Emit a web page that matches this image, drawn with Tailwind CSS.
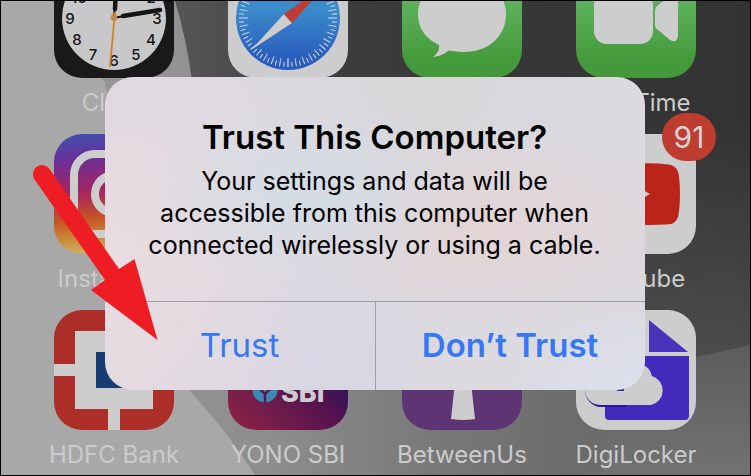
<!DOCTYPE html>
<html lang="en">
<head>
    <meta charset="UTF-8">
    <meta name="viewport" content="width=device-width,initial-scale=1.0">
    <title>Trust This Computer?</title>
    <script src="https://cdn.jsdelivr.net/npm/@tailwindcss/browser@4"></script>
</head>
<body class="bg-black font-['Inter','Liberation_Sans',sans-serif]">
    <main class="relative h-screen overflow-hidden border border-black">
        <!-- wallpaper -->
        <svg class="absolute inset-0 h-full w-full" viewBox="0 0 749 474" preserveAspectRatio="none" aria-hidden="true">
            <defs>
                <linearGradient id="mid" x1="0" y1="0" x2="1" y2="0">
                    <stop offset="0" stop-color="#9a9a9a"/>
                    <stop offset=".35" stop-color="#8e8e8e"/>
                    <stop offset=".6" stop-color="#787777"/>
                    <stop offset=".78" stop-color="#6b6b6b"/>
                    <stop offset="1" stop-color="#686868"/>
                </linearGradient>
                <linearGradient id="dark" x1="0" y1="0" x2="1" y2="0">
                    <stop offset="0" stop-color="#565656"/>
                    <stop offset=".28" stop-color="#3c3c3c"/>
                    <stop offset="1" stop-color="#323232"/>
                </linearGradient>
                <linearGradient id="lift" x1="0" y1="0" x2="0" y2="1">
                    <stop offset=".3" stop-color="#555" stop-opacity="0"/>
                    <stop offset="1" stop-color="#555" stop-opacity=".8"/>
                </linearGradient>
                <linearGradient id="floor" x1="0" y1="0" x2="0" y2="1">
                    <stop offset="0" stop-color="#5c5c5c"/>
                    <stop offset="1" stop-color="#727272"/>
                </linearGradient>
            </defs>
            <rect width="749" height="474" fill="url(#mid)"/>
            <path d="M0 0H51L104 82C130 200 140 330 188 389Q226 430 254 474H0Z" fill="#a8a8a8"/>
            <path d="M174 0Q186 40 191 80Q210 300 420 370Q560 400 749 344V0Z" fill="url(#dark)"/>
            <path d="M174 0Q186 40 191 80Q210 300 420 370Q560 400 749 344V0Z" fill="url(#lift)"/>
            <path d="M600 374Q690 358 749 344V474H600Z" fill="url(#floor)"/>
        </svg>

        <!-- home screen -->
        <div class="relative -mt-[43px] grid grid-cols-4 pr-[27px] pl-[26px] text-2xl text-[#cbcbcb]">
            <div class="flex flex-col items-center">
                <svg class="size-[120px] rounded-[28px] bg-[#191919]" viewBox="0 0 120 120" aria-hidden="true">
                    <circle cx="60" cy="60" r="52" fill="#c8c8ca"/>
                    <g font-size="15" font-weight="500" fill="#151515" text-anchor="middle">
                        <text x="97" y="45">2</text>
                        <text x="103" y="66">3</text>
                        <text x="97" y="87">4</text>
                        <text x="82" y="102">5</text>
                        <text x="60" y="108">6</text>
                        <text x="39" y="102">7</text>
                        <text x="23" y="87">8</text>
                        <text x="16" y="66">9</text>
                        <text x="25" y="45">10</text>
                    </g>
                    <path d="M60 60L62 32M60 60L70 58" stroke="#151515" stroke-width="2"/>
                    <path d="M61 51L62 30M69 58L106 52" stroke="#151515" stroke-width="4.5" stroke-linecap="round"/>
                    <path d="M61 54L56 109" stroke="#d8801c" stroke-width="1.8"/>
                    <circle cx="60" cy="59.500" r="2.500" fill="#999" stroke="#d8801c" stroke-width="1.500"/>
                </svg>
                <span class="h-14 leading-[50px] whitespace-nowrap">Clock</span>
            </div>
            <div class="flex flex-col items-center">
                <svg class="size-[120px] rounded-[28px] bg-[#cdcdcd]" viewBox="0 0 120 120" aria-hidden="true">
                    <defs>
                        <linearGradient id="compass" x1="0" y1="0" x2="0" y2="1">
                            <stop offset=".4" stop-color="#3a8cca"/>
                            <stop offset=".85" stop-color="#2c60c0"/>
                            <stop offset="1" stop-color="#2b58bd"/>
                        </linearGradient>
                    </defs>
                    <circle cx="60" cy="60" r="52" fill="url(#compass)"/>
                    <g fill="none" stroke="#c9d4e0">
                        <circle cx="60" cy="60" r="45" stroke-width="8" pathLength="360" stroke-dasharray="1.300 8.700" stroke-dashoffset=".6"/>
                        <circle cx="60" cy="60" r="46.500" stroke-width="5" pathLength="360" stroke-dasharray="1.300 8.700" stroke-dashoffset="-4.400"/>
                        <circle cx="60" cy="60" r="44.500" stroke="#8fb2dd" stroke-width="9" pathLength="360" stroke-dasharray="2.400 87.600" stroke-dashoffset="1.200"/>
                    </g>
                    <path d="M23 92L56 56L64 65Z" fill="#cdcdcd"/>
                    <path d="M97 28L56 56L64 65Z" fill="#bf3a30"/>
                </svg>
                <span class="h-14 leading-[50px] whitespace-nowrap">Safari</span>
            </div>
            <div class="flex flex-col items-center">
                <svg class="size-[120px] rounded-[28px] bg-linear-to-b from-[#62c062] from-10% via-[#55a950] via-55% to-[#44993a] to-85%" viewBox="0 0 120 120" aria-hidden="true">
                    <path d="M60 18C84 18 104 34 104 56C104 80 84 95 60 94Q52 93 47 92.500Q40 98 31 99Q38 94 37 87C25 81 16 72 16 56C16 34 36 18 60 18Z" fill="#cdcdcd"/>
                </svg>
                <span class="h-14 leading-[50px] whitespace-nowrap">Messages</span>
            </div>
            <div class="flex flex-col items-center">
                <svg class="size-[120px] rounded-[28px] bg-linear-to-b from-[#62c062] from-10% via-[#55a950] via-55% to-[#44993a] to-85%" viewBox="0 0 120 120" aria-hidden="true">
                    <rect x="18" y="34" width="59" height="52" rx="13" fill="#cdcdcd"/>
                    <path d="M79 53Q79 50 81 48L92 39Q102 33 102 42V78Q101 86 94 82L81 71Q79 70 79 67Z" fill="#cdcdcd"/>
                </svg>
                <span class="h-14 leading-[50px] whitespace-nowrap">FaceTime</span>
            </div>

            <div class="flex flex-col items-center">
                <svg class="size-[120px] rounded-[28px]" viewBox="0 0 120 120" aria-hidden="true">
                    <defs>
                        <linearGradient id="insta" x1="0" y1="0" x2=".1" y2="1">
                            <stop offset="0" stop-color="#3c54b2"/>
                            <stop offset=".22" stop-color="#6a2f98"/>
                            <stop offset=".5" stop-color="#a52460"/>
                            <stop offset=".72" stop-color="#c65226"/>
                            <stop offset=".88" stop-color="#c88938"/>
                            <stop offset="1" stop-color="#cfac66"/>
                        </linearGradient>
                    </defs>
                    <rect width="120" height="120" fill="url(#insta)"/>
                    <rect x="20" y="20" width="80" height="80" rx="21" fill="none" stroke="#cdcdcd" stroke-width="8"/>
                    <circle cx="60" cy="60" r="19" fill="none" stroke="#cdcdcd" stroke-width="8"/>
                </svg>
                <span class="h-14 leading-[50px] whitespace-nowrap">Instagram</span>
            </div>
            <div class="flex flex-col items-center">
                <div class="size-[120px] rounded-[28px] bg-[#5c6f86]"></div>
            </div>
            <div class="flex flex-col items-center">
                <div class="size-[120px] rounded-[28px] bg-[#a04a48]"></div>
            </div>
            <div class="flex flex-col items-center">
                <div class="relative">
                    <svg class="size-[120px] rounded-[28px] bg-[#cdcdcd]" viewBox="0 0 120 120" aria-hidden="true">
                        <path d="M60 29Q86 29 95 31Q102 33 103 42Q105 60 103 78Q102 88 95 90Q86 91 60 91Q34 91 25 90Q18 88 17 78Q15 60 17 42Q18 33 25 31Q34 29 60 29Z" fill="#bb2519"/>
                        <path d="M50 46L74 60L50 74Z" fill="#cdcdcd"/>
                    </svg>
                    <span class="absolute -top-[21px] -right-5 flex h-12 w-[54px] items-center justify-center rounded-full bg-[#be3c30] text-3xl text-[#d4d4d4]">91</span>
                </div>
                <span class="h-14 leading-[50px] whitespace-nowrap">YouTube</span>
            </div>

            <div class="flex flex-col items-center">
                <svg class="size-[120px] rounded-[28px] bg-[#ad2e29]" viewBox="0 0 120 120" aria-hidden="true">
                    <path d="M21 21H99V99H21ZM0 54H120V66H0ZM54 0H66V120H54Z" fill="#cdcdcd"/>
                    <rect x="42" y="42" width="36" height="36" fill="#173c72"/>
                </svg>
                <span class="h-14 leading-[50px] whitespace-nowrap">HDFC Bank</span>
            </div>
            <div class="flex flex-col items-center">
                <svg class="size-[120px] rounded-[28px] bg-linear-to-tr from-[#912443] via-[#55114e] via-50% to-[#1c0660] to-80%" viewBox="0 0 120 120" aria-hidden="true">
                    <circle cx="37" cy="80" r="12.500" fill="#3c88b6"/>
                    <path d="M37 93V84M31 78L37 84L43 78" fill="none" stroke="#5c174f" stroke-width="2.500"/>
                    <text x="53" y="92" font-size="27" font-weight="800" fill="#cdcdcd">SBI</text>
                </svg>
                <span class="h-14 leading-[50px] whitespace-nowrap">YONO SBI</span>
            </div>
            <div class="flex flex-col items-center">
                <svg class="size-[120px] rounded-[28px] bg-[#5f3474]" viewBox="0 0 120 120" aria-hidden="true">
                    <circle cx="61" cy="42" r="20" fill="#cdcdcd"/>
                    <path d="M55 54H67L73 109Q61 111 49 109Z" fill="#cdcdcd"/>
                </svg>
                <span class="h-14 leading-[50px] whitespace-nowrap">BetweenUs</span>
            </div>
            <div class="flex flex-col items-center">
                <svg class="size-[120px] rounded-[28px] bg-[#cdcdcd]" viewBox="0 0 120 120" aria-hidden="true">
                    <path d="M73 10V42H112Z" fill="#4b32bb"/>
                    <path d="M29 10H69V46H113V106Q113 110 109 110H33Q29 110 29 106Z" fill="#4429bd"/>
                    <path d="M23 97A17 17 0 0 1 21 64L50 60V97Z" fill="#3114a4"/>
                    <path d="M24 95A15 15 0 0 1 24 65C28 50 50 44 62 53Q74 56 76 66A15 15 0 0 1 75 95Z" fill="#cdcdcd"/>
                    <rect x="41" y="78" width="7" height="3" fill="#4429bd"/>
                </svg>
                <span class="h-14 leading-[50px] whitespace-nowrap">DigiLocker</span>
            </div>
        </div>

        <!-- alert -->
        <div class="absolute inset-0 flex items-center justify-center pr-0.5 pb-[9px]">
            <div role="alertdialog" aria-labelledby="alert-title" aria-describedby="alert-text"
            class="w-full max-w-[540px] overflow-hidden rounded-[28px] bg-[#dcd9df] bg-[radial-gradient(ellipse_at_38%_38%,#d4dce5_0%,transparent_35%),radial-gradient(ellipse_at_68%_48%,#e4d3d4_0%,transparent_40%),radial-gradient(ellipse_60%_110%_at_0%_60%,#eadce1_0%,transparent_70%),radial-gradient(ellipse_at_38%_90%,#d8d6e4_0%,transparent_32%),radial-gradient(ellipse_at_100%_100%,#dce1ed_0%,transparent_20%),radial-gradient(ellipse_at_60%_0%,#d7d6d8_0%,transparent_40%)] text-center">
                <div class="px-8 pt-10 pb-10 text-black">
                    <h1 id="alert-title" class="text-[33px] leading-10 font-semibold">Trust This Computer?</h1>
                    <p id="alert-text" class="mt-2 text-[25px] leading-8">Your settings and data will be<br>accessible from this computer when<br>connected wirelessly or using a cable.</p>
                </div>
                <div class="grid grid-cols-2 border-t border-[#a29ea5] text-[33px] text-[#3478f6]">
                    <button type="button" class="h-[88px]">Trust</button>
                    <button type="button" class="h-[88px] border-l border-[#a29ea5] font-semibold">Don’t Trust</button>
                </div>
            </div>
        </div>

        <!-- pointer arrow -->
        <svg class="absolute top-[163px] left-8 h-[178px] w-[126px]" viewBox="33 164 126 178" aria-hidden="true">
            <path d="M49.500 169L119 269L134.500 259L157.500 340L91 290L105 280L34.500 179.500A9 9 0 0 1 49.500 169Z" fill="#ee1d24"/>
        </svg>
    </main>
</body>
</html>
